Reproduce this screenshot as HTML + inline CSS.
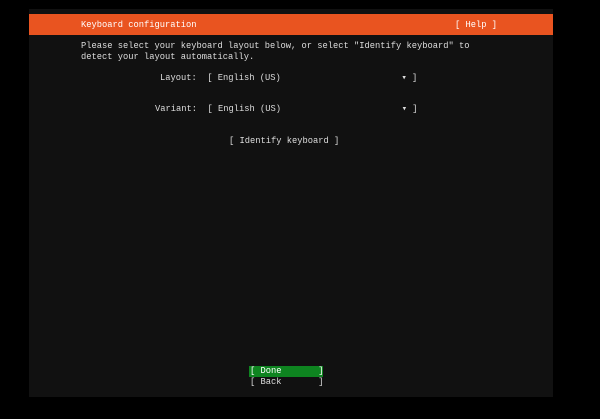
<!DOCTYPE html>
<html><head><style>
html,body{margin:0;padding:0;background:#000;width:600px;height:419px;overflow:hidden}
.p{position:absolute;left:29px;top:9px;width:524px;height:388px;background:#111}
.bar{position:absolute;left:29px;top:14px;width:524px;height:21px;background:#e95420}
.t{position:absolute;font-family:"Liberation Mono",monospace;font-size:8.75px;color:#ddd;white-space:pre;line-height:10.5px}
.w{color:#fff}
.g{background:#0e8420;color:#fff}
</style></head><body>
<div class="p"></div>
<div class="bar"></div>
<div class="t w" style="left:81px;top:20px">Keyboard configuration</div>
<div class="t w" style="left:455px;top:20px">[ Help ]</div>
<div class="t" style="left:81px;top:41px">Please select your keyboard layout below, or select "Identify keyboard" to
detect your layout automatically.</div>
<div class="t" style="left:160px;top:73px">Layout:  [ English (US)                       ▾ ]</div>
<div class="t" style="left:155px;top:104px">Variant:  [ English (US)                       ▾ ]</div>
<div class="t" style="left:229px;top:136px">[ Identify keyboard ]</div>
<div class="t g" style="left:249px;top:366px;width:73px;padding-left:1px">[ Done       ]</div>
<div class="t" style="left:250px;top:377px">[ Back       ]</div>
</body></html>
